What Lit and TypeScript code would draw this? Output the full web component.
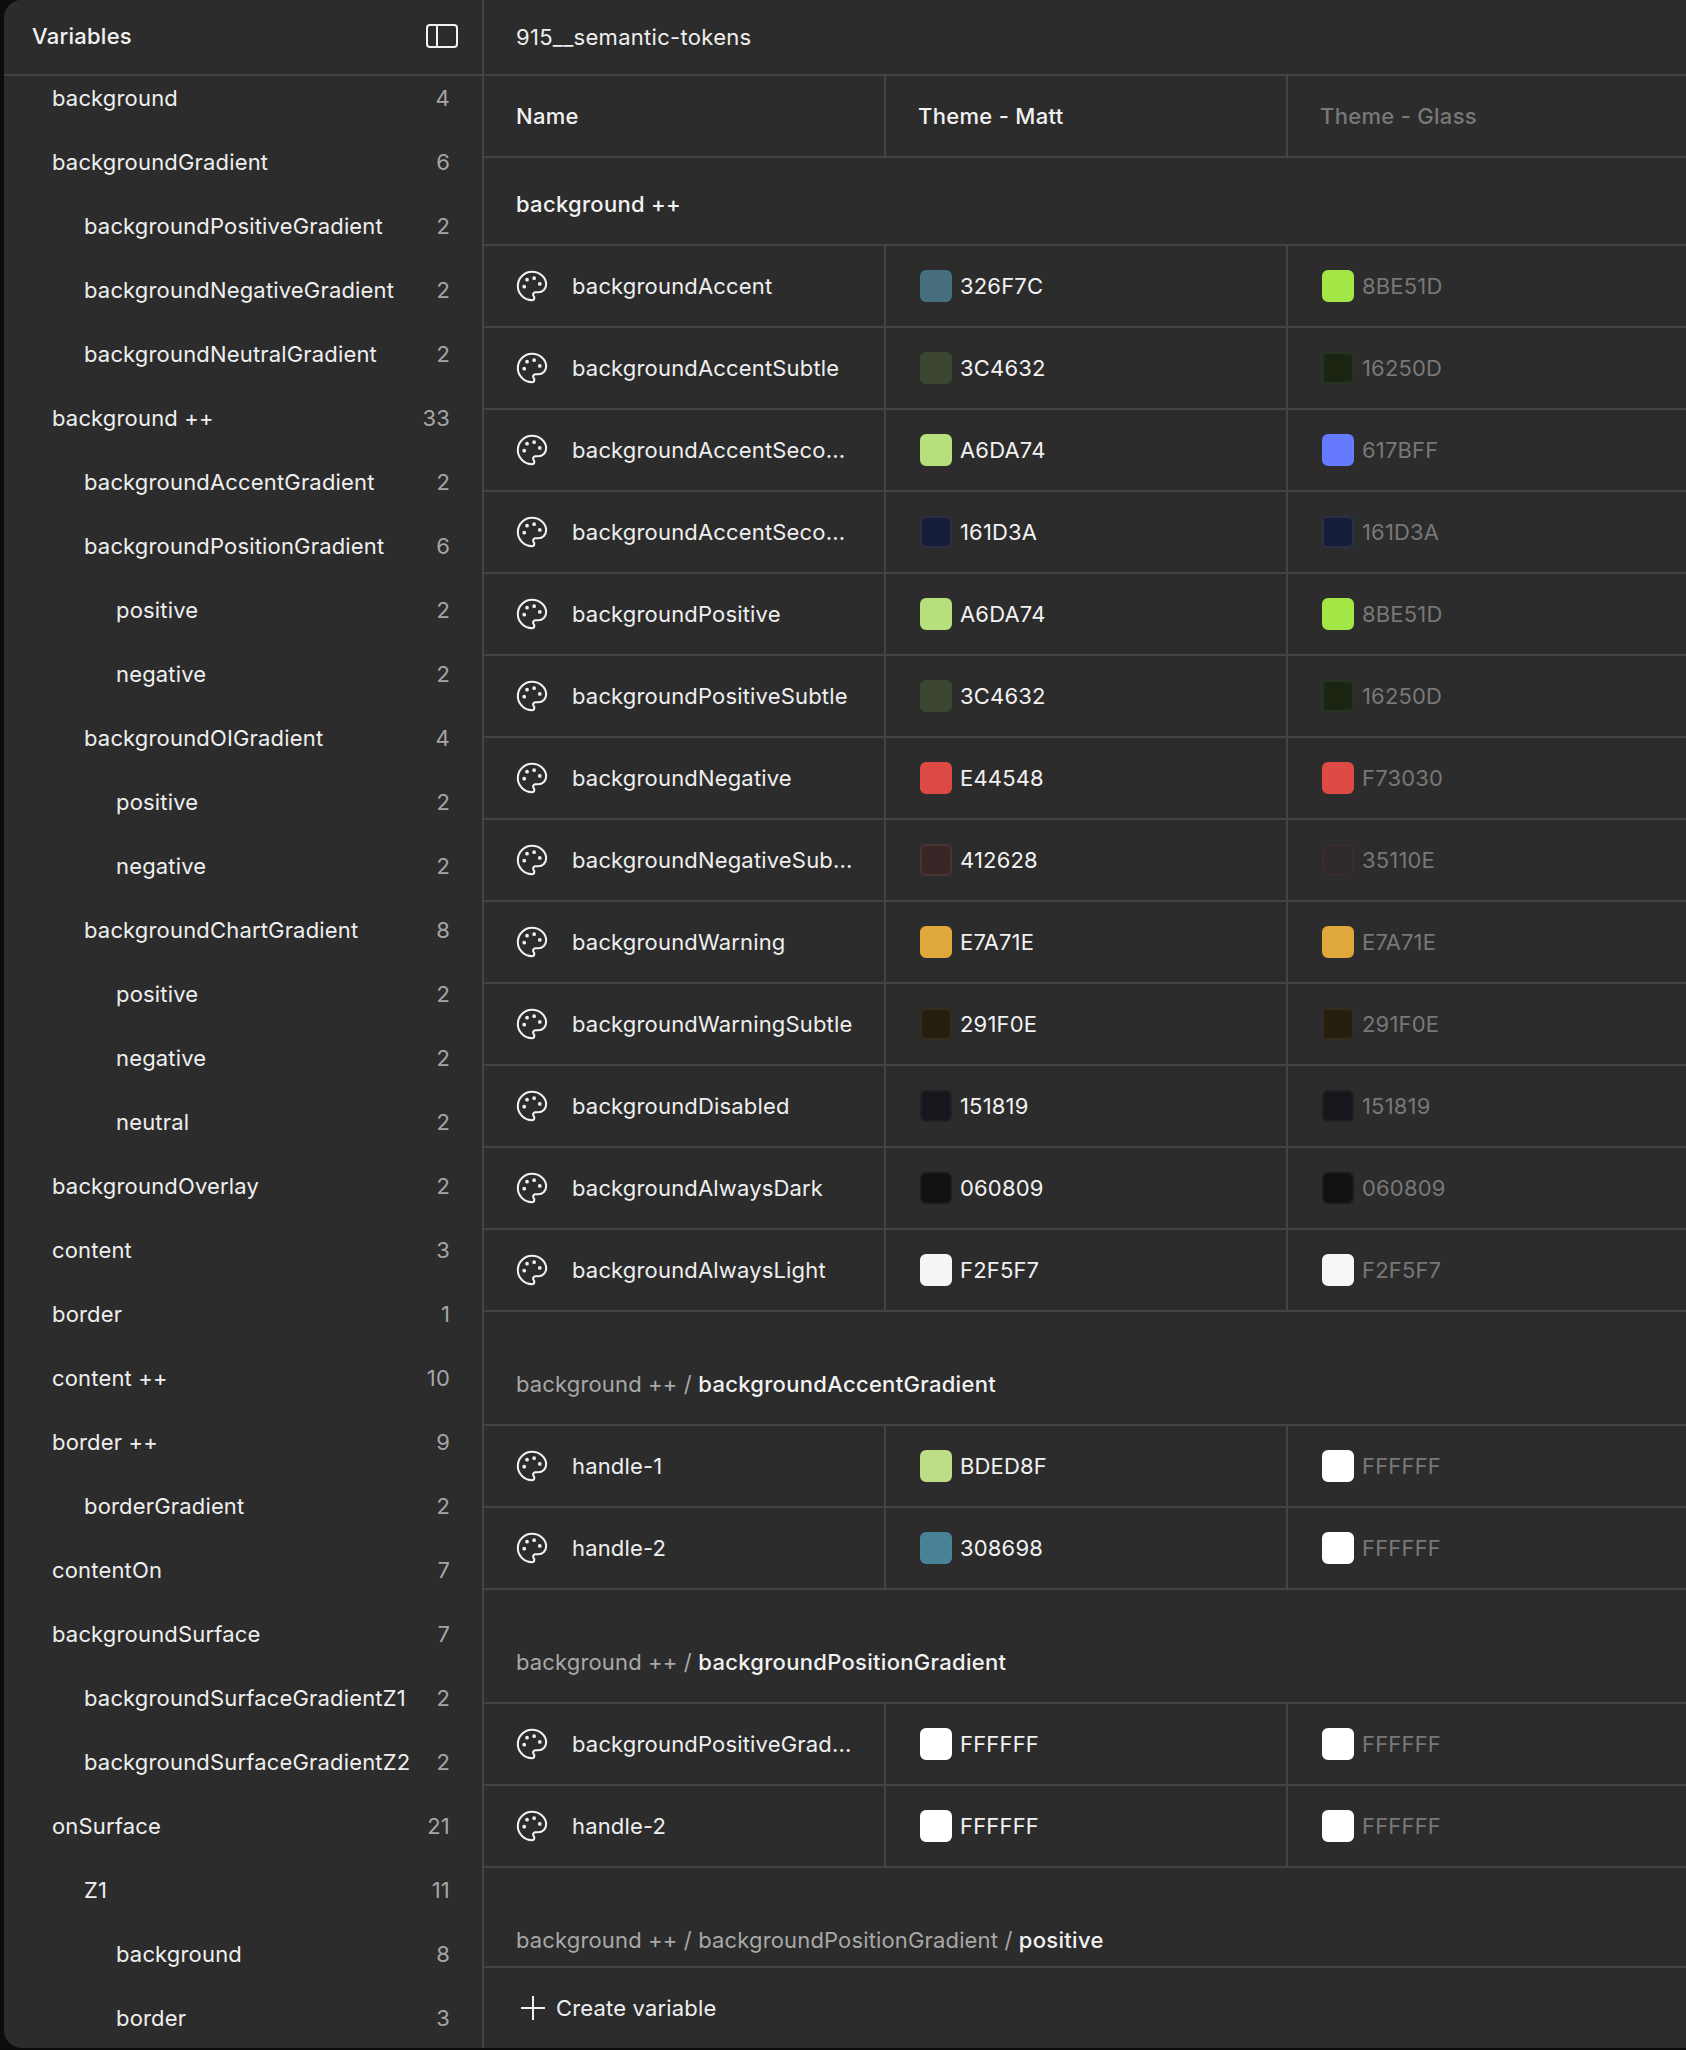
import { LitElement, html, css } from "lit";
import { customElement } from "lit/decorators.js";

type Side = [string, number, number];
const SIDE: Side[] = [
  ["background", 0, 4], ["backgroundGradient", 0, 6], ["backgroundPositiveGradient", 1, 2],
  ["backgroundNegativeGradient", 1, 2], ["backgroundNeutralGradient", 1, 2], ["background ++", 0, 33],
  ["backgroundAccentGradient", 1, 2], ["backgroundPositionGradient", 1, 6], ["positive", 2, 2],
  ["negative", 2, 2], ["backgroundOIGradient", 1, 4], ["positive", 2, 2], ["negative", 2, 2],
  ["backgroundChartGradient", 1, 8], ["positive", 2, 2], ["negative", 2, 2], ["neutral", 2, 2],
  ["backgroundOverlay", 0, 2], ["content", 0, 3], ["border", 0, 1], ["content ++", 0, 10],
  ["border ++", 0, 9], ["borderGradient", 1, 2], ["contentOn", 0, 7], ["backgroundSurface", 0, 7],
  ["backgroundSurfaceGradientZ1", 1, 2], ["backgroundSurfaceGradientZ2", 1, 2], ["onSurface", 0, 21],
  ["Z1", 1, 11], ["background", 2, 8], ["border", 2, 3],
];

interface Sw { hex: string; fill: string; edge?: string }
const sw = (hex: string, fill: string, edge?: string): Sw => ({ hex, fill, edge });
interface Row { name: string; a: Sw; b: Sw }
interface Group { path?: string; title: string; first?: boolean; rows: Row[] }

const WHITE = sw("FFFFFF", "#ffffff");
const GROUPS: Group[] = [
  { title: "background ++", first: true, rows: [
    { name: "backgroundAccent", a: sw("326F7C", "#466e7c"), b: sw("8BE51D", "#a4e644") },
    { name: "backgroundAccentSubtle", a: sw("3C4632", "#3c4632"), b: sw("16250D", "#1c2412", "#263320") },
    { name: "backgroundAccentSeco...", a: sw("A6DA74", "#b6e07c"), b: sw("617BFF", "#667aff") },
    { name: "backgroundAccentSeco...", a: sw("161D3A", "#161d3a", "#2a2f45"), b: sw("161D3A", "#161d3a", "#2a2f45") },
    { name: "backgroundPositive", a: sw("A6DA74", "#b6e07c"), b: sw("8BE51D", "#a4e644") },
    { name: "backgroundPositiveSubtle", a: sw("3C4632", "#3c4632"), b: sw("16250D", "#1c2412", "#263320") },
    { name: "backgroundNegative", a: sw("E44548", "#dd4a45"), b: sw("F73030", "#df4a45") },
    { name: "backgroundNegativeSub...", a: sw("412628", "#372726", "#4a3434"), b: sw("35110E", "#2f2b2a", "#3a2c2a") },
    { name: "backgroundWarning", a: sw("E7A71E", "#e0a83c"), b: sw("E7A71E", "#e0a83c") },
    { name: "backgroundWarningSubtle", a: sw("291F0E", "#261f10", "#352b20"), b: sw("291F0E", "#261f10", "#352b20") },
    { name: "backgroundDisabled", a: sw("151819", "#15171c", "#1e2024"), b: sw("151819", "#15171c", "#1e2024") },
    { name: "backgroundAlwaysDark", a: sw("060809", "#111111", "#1a1c1c"), b: sw("060809", "#111111", "#1a1c1c") },
    { name: "backgroundAlwaysLight", a: sw("F2F5F7", "#f5f5f5"), b: sw("F2F5F7", "#f7f7f7") },
  ]},
  { path: "background ++ / ", title: "backgroundAccentGradient", rows: [
    { name: "handle-1", a: sw("BDED8F", "#bcdf85"), b: WHITE },
    { name: "handle-2", a: sw("308698", "#4a8397"), b: WHITE },
  ]},
  { path: "background ++ / ", title: "backgroundPositionGradient", rows: [
    { name: "backgroundPositiveGrad...", a: WHITE, b: WHITE },
    { name: "handle-2", a: WHITE, b: WHITE },
  ]},
  { path: "background ++ / backgroundPositionGradient / ", title: "positive", rows: [] },
];

@customElement("app-root")
export class AppRoot extends LitElement {
  static styles = css`
    :host { display: block; width: 1686px; height: 2050px; background: #0d0c0a; font-family: Inter, "Liberation Sans", sans-serif; font-size: 22px; letter-spacing: 0.17px; color: #f2f2f2; overflow: hidden; }
    .panel { margin-left: 4px; width: 1682px; height: 2048px; background: #2c2c2c; border-radius: 18px 0 0 18px; overflow: hidden; display: flex; }
    .side { width: 478px; border-right: 2px solid #444; flex: none; display: flex; flex-direction: column; overflow: hidden; }
    .side-head { height: 76px; box-sizing: border-box; flex: none; border-bottom: 2px solid #444; display: flex; align-items: center; justify-content: space-between; padding: 0 24px 3px 28px; font-weight: 500; letter-spacing: 0.25px; position: relative; z-index: 1; background: #2c2c2c; }
    .side-list { margin-top: -10px; padding-right: 32px; }
    .side-row { height: 64px; display: flex; align-items: center; justify-content: space-between; color: #efefef; }
    .count { color: #a6a6a6; }
    .l0 { padding-left: 48px; }
    .l1 { padding-left: 80px; }
    .l2 { padding-left: 112px; }
    .main { flex: 1; min-width: 0; display: flex; flex-direction: column; }
    .main-head { height: 76px; box-sizing: border-box; flex: none; border-bottom: 2px solid #444; display: flex; align-items: center; padding: 0 0 0 32px; color: #efefef; letter-spacing: 0.3px; }
    .body { flex: 1; min-height: 0; overflow: hidden; }
    .cols { display: grid; grid-template-columns: 400px 402px 1fr; border-bottom: 2px solid #444; }
    .cols > div { display: flex; align-items: center; }
    .cols > div + div { border-left: 2px solid #444; }
    .cols.head { height: 80px; font-weight: 500; letter-spacing: 0.3px; }
    .cols.head > div { padding-left: 32px; }
    .dim { color: #787878; }
    .cols.row { height: 82px; box-sizing: border-box; }
    .name { padding-left: 34px; gap: 26px; color: #efefef; }
    .name svg { width: 34px; height: 34px; margin-left: -3px; margin-right: -3px; flex: none; }
    .val { padding-left: 34px; gap: 8px; }
    .swatch { width: 32px; height: 32px; box-sizing: border-box; border-radius: 6px; flex: none; border: 2px solid transparent; }
    .group { display: flex; align-items: flex-end; padding: 0 0 27px 32px; border-bottom: 2px solid #444; box-sizing: border-box; height: 114px; font-weight: 500; letter-spacing: 0.3px; }
    .group.first { height: 88px; }
    .path { color: #a8a8a8; font-weight: 400; white-space: pre; letter-spacing: 0.15px; }
    .foot { height: 80px; flex: none; border-top: 2px solid #444; display: flex; align-items: center; gap: 10px; padding-left: 36px; color: #efefef; background: #2c2c2c; }
    .foot svg { width: 26px; height: 26px; flex: none; }
  `;

  private palette() {
    return html`<svg viewBox="0 0 24 24" fill="none" stroke="#f2f2f2" stroke-width="1.45" stroke-linecap="round" stroke-linejoin="round">
      <circle cx="13.5" cy="6.5" r=".6" fill="#f2f2f2"/><circle cx="17.5" cy="10.5" r=".6" fill="#f2f2f2"/><circle cx="8.5" cy="7.5" r=".6" fill="#f2f2f2"/><circle cx="6.5" cy="12.5" r=".6" fill="#f2f2f2"/>
      <path d="M12 2C6.5 2 2 6.5 2 12s4.5 10 10 10c.926 0 1.648-.746 1.648-1.688 0-.437-.18-.835-.437-1.125-.29-.289-.438-.652-.438-1.125a1.64 1.64 0 0 1 1.668-1.668h1.996c3.051 0 5.555-2.503 5.555-5.554C21.965 6.012 17.461 2 12 2z"/>
    </svg>`;
  }

  private swatch(s: Sw) {
    return html`<span class="swatch" style="background-color:${s.fill};border-color:${s.edge ?? s.fill}"></span>`;
  }

  render() {
    return html`<div class="panel">
      <aside class="side">
        <div class="side-head"><span>Variables</span>
          <svg width="32" height="26" viewBox="0 0 32 26" fill="none" stroke="#f2f2f2" stroke-width="2"><rect x="1" y="2" width="30" height="22" rx="3"/><path d="M11 2v22"/></svg>
        </div>
        <div class="side-list">
          ${SIDE.map(([n, l, c]) => html`<div class="side-row l${l}"><span>${n}</span><span class="count">${c}</span></div>`)}
        </div>
      </aside>
      <section class="main">
        <div class="main-head">915__semantic-tokens</div>
        <div class="body">
          <div class="cols head"><div>Name</div><div>Theme - Matt</div><div class="dim">Theme - Glass</div></div>
          ${GROUPS.map((g) => html`
            <div class="group ${g.first ? "first" : ""}">${g.path ? html`<span class="path">${g.path}</span>` : ""}<span>${g.title}</span></div>
            ${g.rows.map((r) => html`<div class="cols row">
              <div class="name">${this.palette()}<span>${r.name}</span></div>
              <div class="val">${this.swatch(r.a)}<span>${r.a.hex}</span></div>
              <div class="val dim">${this.swatch(r.b)}<span>${r.b.hex}</span></div>
            </div>`)}
          `)}
        </div>
        <div class="foot">
          <svg viewBox="0 0 26 26" fill="none" stroke="#f2f2f2" stroke-width="2"><path d="M13 1v24M1 13h24"/></svg>
          <span>Create variable</span>
        </div>
      </section>
    </div>`;
  }
}
